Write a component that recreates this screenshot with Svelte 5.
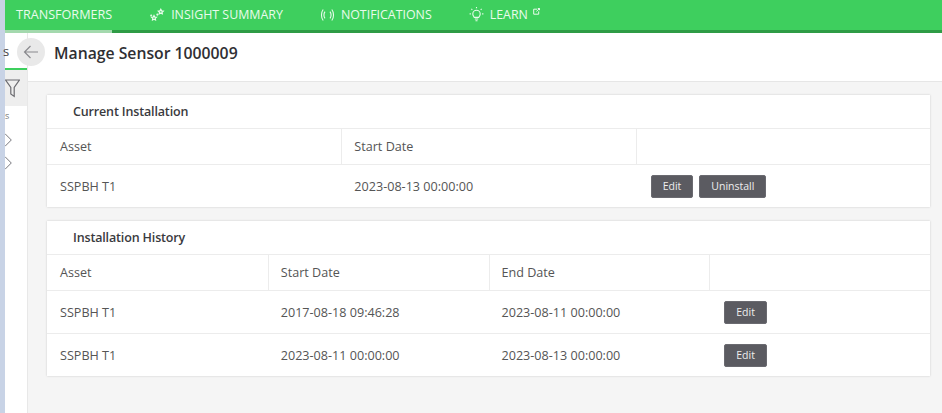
<script>
  const tabs = [
    { label: 'TRANSFORMERS', icon: '', active: true },
    { label: 'INSIGHT SUMMARY', icon: 'insight' },
    { label: 'NOTIFICATIONS', icon: 'notify' },
    { label: 'LEARN', icon: 'learn', external: true }
  ]

  const current = {
    title: 'Current Installation',
    columns: ['Asset', 'Start Date', ''],
    rows: [{ cells: ['SSPBH T1', '2023-08-13 00:00:00'], uninstall: true }]
  }

  const history = {
    title: 'Installation History',
    columns: ['Asset', 'Start Date', 'End Date', ''],
    rows: [
      { cells: ['SSPBH T1', '2017-08-18 09:46:28', '2023-08-11 00:00:00'] },
      { cells: ['SSPBH T1', '2023-08-11 00:00:00', '2023-08-13 00:00:00'] }
    ]
  }
</script>

{#snippet card(data)}
  <section class="card" style="--cols: {data.columns.length}">
    <h2>{data.title}</h2>
    <div class="row head">
      {#each data.columns as col}
        <div class="cell">{col}</div>
      {/each}
    </div>
    {#each data.rows as row}
      <div class="row body">
        {#each row.cells as value}
          <div class="cell">{value}</div>
        {/each}
        <div class="cell actions">
          <button>Edit</button>
          {#if row.uninstall}
            <button>Uninstall</button>
          {/if}
        </div>
      </div>
    {/each}
  </section>
{/snippet}

<div class="page">
  <div class="edge"></div>
  <div class="shell">
    <nav class="topbar">
      {#each tabs as tab}
        <a class="tab" class:active={tab.active} href="#top">
          {#if tab.icon === 'insight'}
            <svg width="15" height="14" viewBox="0 0 15 14" fill="none" stroke="currentColor" stroke-width="1.2">
              <path d="M4 7.6l.8 1.5 1.6.2-1.2 1.1.3 1.6L4 11.3l-1.5.7.3-1.6-1.2-1.1 1.6-.2z" />
              <path d="M10.8 1.4l.8 1.5 1.6.2-1.2 1.1.3 1.6-1.5-.7-1.5.7.3-1.6-1.2-1.1 1.6-.2z" />
              <circle cx="7.4" cy="6.6" r=".5" />
              <circle cx="1.2" cy="7.6" r=".4" />
            </svg>
          {:else if tab.icon === 'notify'}
            <svg width="15" height="14" viewBox="0 0 15 14" fill="none" stroke="currentColor" stroke-width="1.1">
              <path d="M3.2 1.5C.9 4.5.9 9.5 3.2 12.5" />
              <path d="M5 3.6C3.8 5.5 3.8 8.5 5 10.4" />
              <path d="M11.8 1.5c2.3 3 2.3 8 0 11" />
              <path d="M10 3.6c1.2 1.9 1.2 4.9 0 6.8" />
            </svg>
          {:else if tab.icon === 'learn'}
            <svg width="15" height="16" viewBox="0 0 15 16" fill="none" stroke="currentColor" stroke-width="1.1">
              <path d="M5.2 10.4C4.6 9 3.8 8.5 3.8 6.9a3.7 3.7 0 0 1 7.4 0c0 1.6-.8 2.1-1.4 3.5z" />
              <path d="M5.8 12h3.4M6.5 13.8h2" />
              <path d="M7.5 0v1.3M2.4 1.9l.9.9M12.6 1.9l-.9.9M.6 6.9h1.3M13.1 6.9h1.3" />
            </svg>
          {/if}
          <span>{tab.label}</span>
          {#if tab.external}
            <svg class="ext" width="7" height="7" viewBox="0 0 7 7" fill="none" stroke="currentColor" stroke-width="1">
              <path d="M4 1.2H.7v5h5V3.4M3.4 3.4L6.5.5M4.8.5h1.7v1.7" />
            </svg>
          {/if}
        </a>
      {/each}
    </nav>

    <div class="split">
      <aside class="sidebar">
        <div class="side-tab">s</div>
        <div class="filter">
          <svg width="15" height="19" viewBox="0 0 15 19" fill="none" stroke="#6b6b70" stroke-width="1.2">
            <path d="M.6 1h13.8L9.2 8.4v9L5.8 15V8.4z" />
          </svg>
        </div>
        <div class="side-label">s</div>
        <div class="chevrons">
          <svg width="7" height="14" viewBox="0 0 7 14" fill="none" stroke="#77777c" stroke-width="1"><path d="M0 .7l6.3 6.3L0 13.3" /></svg>
          <svg width="7" height="14" viewBox="0 0 7 14" fill="none" stroke="#77777c" stroke-width="1"><path d="M0 .7l6.3 6.3L0 13.3" /></svg>
        </div>
      </aside>

      <main class="main">
        <header class="header">
          <button class="back" aria-label="Back">
            <svg width="16" height="14" viewBox="0 0 16 14" fill="none" stroke="#8a8a8e" stroke-width="1.2">
              <path d="M15 7H1.5M7.5 1L1.5 7l6 6" />
            </svg>
          </button>
          <h1>Manage Sensor 1000009</h1>
        </header>
        <div class="content">
          {@render card(current)}
          {@render card(history)}
        </div>
      </main>
    </div>
  </div>
</div>

<style>
  :global(body) {
    margin: 0;
    background: #fff;
  }

  .page {
    display: flex;
    height: 413px;
    overflow: hidden;
    font-family: 'Open Sans', 'Liberation Sans', sans-serif;
    color: #555;
  }

  .edge {
    width: 5px;
    flex: none;
    background: #c8d3e6;
  }

  .shell {
    flex: 1;
    display: flex;
    flex-direction: column;
    min-width: 0;
  }

  .topbar {
    height: 30px;
    display: flex;
    background: #3ecf5e;
    border-bottom: 3px solid #2f9c46;
    flex: none;
  }

  .tab {
    display: flex;
    align-items: center;
    gap: 6px;
    height: 30px;
    margin-right: 37px;
    color: #e9fbec;
    font-size: 12.4px;
    text-decoration: none;
    white-space: nowrap;
  }

  .tab span {
    margin-top: -2px;
  }

  .tab.active {
    padding-left: 11px;
    margin-right: 38px;
    box-shadow: 0 3px 0 #a4d9ae;
    font-size: 12.6px;
  }

  .ext {
    margin: -8px 0 0 -1px;
  }

  .split {
    flex: 1;
    display: flex;
    min-height: 0;
  }

  .sidebar {
    width: 23px;
    flex: none;
    display: flex;
    flex-direction: column;
  }

  .side-tab {
    height: 33px;
    border-bottom: 2px solid #3ecf5e;
    padding-top: 2px;
    font-size: 13px;
    line-height: 32px;
    color: #444;
    text-indent: -2px;
  }

  .filter {
    height: 36px;
    background: #eee;
    display: flex;
    align-items: flex-start;
    padding-top: 9px;
    box-sizing: border-box;
  }

  .side-label {
    height: 21px;
    line-height: 20px;
    font-size: 9px;
    color: #777;
  }

  .chevrons {
    display: flex;
    flex-direction: column;
    gap: 9px;
    padding-top: 6px;
  }

  .main {
    flex: 1;
    min-width: 0;
    display: flex;
    flex-direction: column;
    border-left: 1px solid #e8e8e8;
    margin-left: -1px;
  }

  .header {
    height: 49px;
    box-sizing: border-box;
    flex: none;
    display: flex;
    align-items: center;
    background: #fff;
    border-bottom: 1px solid #e6e6e6;
  }

  .back {
    width: 28px;
    height: 28px;
    margin: 0 9px 10px -11px;
    padding: 0;
    border: none;
    border-radius: 50%;
    background: #e9e9e9;
    display: flex;
    align-items: center;
    justify-content: center;
    flex: none;
  }

  h1 {
    margin: 0 0 8px;
    font-size: 15.75px;
    font-weight: 600;
    color: #2f2f33;
  }

  .content {
    flex: 1;
    background: #f5f5f5;
    padding: 13px 12px 0 19px;
    display: flex;
    flex-direction: column;
    gap: 14px;
  }

  .card {
    background: #fff;
    box-shadow: 0 0 2px rgba(0, 0, 0, 0.18);
  }

  h2 {
    margin: 0;
    height: 33px;
    line-height: 33px;
    padding-left: 26px;
    font-size: 12.5px;
    letter-spacing: -0.15px;
    font-weight: 600;
    color: #3a3a3e;
    box-sizing: border-box;
  }

  .row {
    display: grid;
    grid-template-columns: repeat(var(--cols), 1fr);
    border-top: 1px solid #ececec;
    box-sizing: border-box;
    font-size: 12.6px;
    color: #555;
  }

  .row.head {
    height: 36px;
  }

  .row.body {
    height: 43px;
  }

  .cell {
    display: flex;
    align-items: center;
    padding-left: 13px;
  }

  .row.head .cell + .cell {
    border-left: 1px solid #ececec;
    padding-left: 12px;
  }

  .actions {
    gap: 6px;
    padding-left: 15px;
  }

  button {
    font: inherit;
  }

  .actions button {
    height: 23px;
    padding: 0 11px;
    border: 1px solid #6a6a70;
    border-radius: 2px;
    background: #5b5b61;
    color: #eee;
    font-size: 10.5px;
  }
</style>
